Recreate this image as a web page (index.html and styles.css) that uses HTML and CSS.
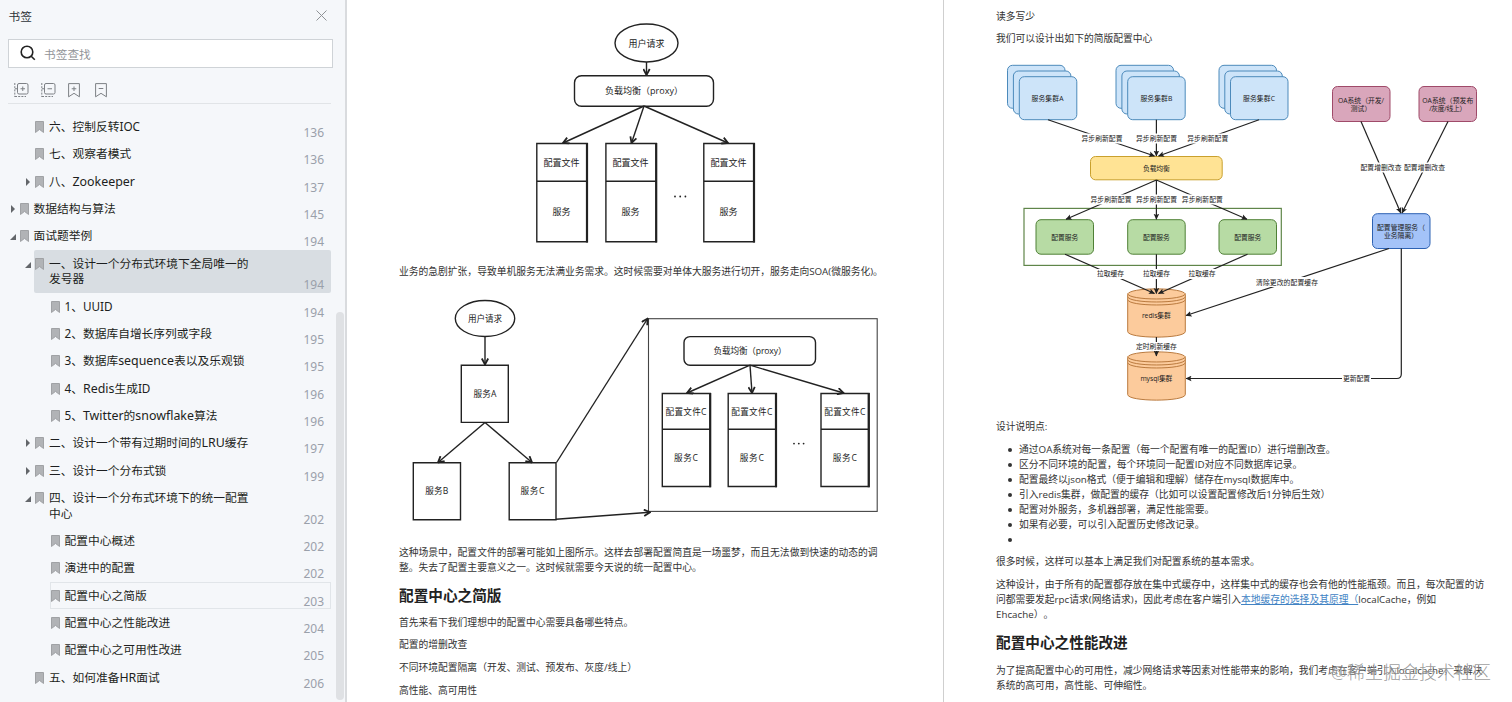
FILE: index.html
```html
<!DOCTYPE html>
<html lang="zh-CN">
<head>
  <meta charset="UTF-8" />
  <meta name="viewport" content="width=device-width, initial-scale=1.0"/>
  <title>书签</title>
  <link rel="stylesheet" href="styles.css">
</head>
<body>
  <!-- shared icons and arrow heads -->
  <svg class="defs" width="0" height="0">
    <defs>
      <symbol id="mark" viewBox="0 0 9 12"><path d="M.5 .5h8v11L4.5 8.4 .5 11.5z" fill="#b1b3b6" stroke="#a0a2a5"/></symbol>
      <marker id="open" viewBox="0 0 8 8" refX="7" refY="4" markerWidth="8" markerHeight="8" markerUnits="userSpaceOnUse" orient="auto">
        <path d="M1 .8L7 4 1 7.2" fill="none" stroke="#222" stroke-width="1.8"/>
      </marker>
      <marker id="solid" viewBox="0 0 6 6" refX="5.5" refY="3" markerWidth="6" markerHeight="6" markerUnits="userSpaceOnUse" orient="auto">
        <path d="M0 .2L6 3 0 5.8 1.2 3z" fill="#222"/>
      </marker>
    </defs>
  </svg>

  <aside class="sidebar">
    <header class="side-head">
      <span>书签</span>
      <svg width="11" height="11" viewBox="0 0 11 11"><path d="M.5 .5l10 10M10.500 .5l-10 10" stroke="#8f9296" fill="none"/></svg>
    </header>
    <div class="search">
      <svg width="16" height="16" viewBox="0 0 16 16" fill="none" stroke="#222" stroke-width="1.6"><circle cx="7" cy="7" r="5.8"/><path d="M11.200 11.200l3.600 3.600"/></svg>
      <span>书签查找</span>
    </div>
    <div class="tools">
      <svg width="15" height="15" viewBox="0 0 15 15" fill="none" stroke="#7d8085"><rect x="3.500" y=".5" width="10.500" height="10.500" rx="1.500"/><path d="M8.750 3.500v4.500M6.500 5.750h4.500M1 5.750h2"/><path d="M.8 0v14M1 13.500h11" stroke-dasharray="2 1.200"/></svg>
      <svg width="15" height="15" viewBox="0 0 15 15" fill="none" stroke="#7d8085"><rect x="3.500" y=".5" width="10.500" height="10.500" rx="1.500"/><path d="M6.500 5.750h4.500M1 5.750h2"/><path d="M.8 0v14M1 13.500h11" stroke-dasharray="2 1.200"/></svg>
      <svg class="bm" width="12" height="15" viewBox="0 0 12 15" fill="none" stroke="#7d8085"><path d="M.6 .6h10.800v13.200L6 10.300 .6 13.800zM6 3.500v4.500M3.700 5.750h4.600"/></svg>
      <svg class="bm" width="12" height="15" viewBox="0 0 12 15" fill="none" stroke="#7d8085"><path d="M.6 .6h10.800v13.200L6 10.300 .6 13.800zM3.700 5.500h4.600"/></svg>
    </div>

    <ul class="tree">
      <li class="l1"><svg><use href="#mark"/></svg><span>六、控制反转IOC</span><b>136</b></li>
      <li class="l1"><svg><use href="#mark"/></svg><span>七、观察者模式</span><b>136</b></li>
      <li class="l1 closed"><svg><use href="#mark"/></svg><span>八、<i>Zookeeper</i></span><b>137</b></li>
      <li class="l0 closed"><svg><use href="#mark"/></svg><span>数据结构与算法</span><b>145</b></li>
      <li class="l0 opened"><svg><use href="#mark"/></svg><span>面试题举例</span><b>194</b></li>
      <li class="l1 opened selected"><svg><use href="#mark"/></svg><span>一、设计一个分布式环境下全局唯一的<br>发号器</span><b>194</b></li>
      <li class="l2"><svg><use href="#mark"/></svg><span>1、UUID</span><b>194</b></li>
      <li class="l2"><svg><use href="#mark"/></svg><span>2、数据库自增长序列或字段</span><b>195</b></li>
      <li class="l2"><svg><use href="#mark"/></svg><span>3、数据库<i>sequence</i>表以及乐观锁</span><b>195</b></li>
      <li class="l2"><svg><use href="#mark"/></svg><span>4、<i>Redis</i>生成ID</span><b>196</b></li>
      <li class="l2"><svg><use href="#mark"/></svg><span>5、<i>Twitter</i>的<i>snowflake</i>算法</span><b>196</b></li>
      <li class="l1 closed"><svg><use href="#mark"/></svg><span>二、设计一个带有过期时间的<i>LRU</i>缓存</span><b>197</b></li>
      <li class="l1 closed"><svg><use href="#mark"/></svg><span>三、设计一个分布式锁</span><b>199</b></li>
      <li class="l1 opened"><svg><use href="#mark"/></svg><span>四、设计一个分布式环境下的统一配置<br>中心</span><b>202</b></li>
      <li class="l2"><svg><use href="#mark"/></svg><span>配置中心概述</span><b>202</b></li>
      <li class="l2"><svg><use href="#mark"/></svg><span>演进中的配置</span><b>202</b></li>
      <li class="l2 current"><svg><use href="#mark"/></svg><span>配置中心之简版</span><b>203</b></li>
      <li class="l2"><svg><use href="#mark"/></svg><span>配置中心之性能改进</span><b>204</b></li>
      <li class="l2"><svg><use href="#mark"/></svg><span>配置中心之可用性改进</span><b>205</b></li>
      <li class="l1"><svg><use href="#mark"/></svg><span>五、如何准备<i>HR</i>面试</span><b>206</b></li>
    </ul>
    <div class="scrollbar"></div>
  </aside>

  <main class="page page-left">
    <!-- single proxy in front of the services -->
    <svg class="diagram plain" width="596" height="264" viewBox="347 0 596 264">
      <ellipse cx="646.500" cy="43" rx="31.500" ry="19"/>
      <rect x="574.500" y="75.700" width="139" height="30.500" rx="7"/>
      <g class="wire">
        <path d="M646.500 62V75"/>
        <path d="M644 106L563 143"/>
        <path d="M644 106L631.500 143"/>
        <path d="M644 106L728 143"/>
      </g>
      <path d="M536.800 143.500h50.400v98.300h-50.400zM536.800 181.300h50.400M605.900 143.500h50.400v98.300h-50.400zM605.900 181.300h50.400M703.800 143.500h50.400v98.300h-50.400zM703.800 181.300h50.400"/>
      <path class="thick" d="M587 143v99.500M656.200 143v99.500M754 143v99.500"/>
      <text x="646.500" y="43" textLength="36">用户请求</text>
      <text x="644" y="90.500" textLength="78">负载均衡（proxy）</text>
      <text x="561.500" y="162" textLength="36">配置文件</text>
      <text x="630.500" y="162" textLength="36">配置文件</text>
      <text x="728.500" y="162" textLength="36">配置文件</text>
      <text x="561.500" y="211.500">服务</text>
      <text x="630.500" y="211.500">服务</text>
      <text x="728.500" y="211.500">服务</text>
      <g class="dots"><circle cx="675" cy="196.500" r=".9"/><circle cx="680.200" cy="196.500" r=".9"/><circle cx="685.400" cy="196.500" r=".9"/></g>
    </svg>

    <p>业务的急剧扩张，导致单机服务无法满业务需求。这时候需要对单体大服务进行切开，服务走向SOA(微服务化)。</p>

    <!-- service C expanded into its own cluster -->
    <svg class="diagram plain small" width="596" height="266" viewBox="347 279 596 266">
      <rect class="frame" x="648.500" y="318.700" width="228.700" height="192.700"/>
      <ellipse cx="485" cy="318.500" rx="29.700" ry="18"/>
      <path d="M461.300 365.200h47v57.200h-47zM413.300 462.800h47.200v57h-47.200zM509.200 462.800h46.800v57h-46.800z"/>
      <rect x="684" y="336.600" width="131.500" height="28.600" rx="6"/>
      <path d="M662.300 393.500h48v93h-48zM662.300 429.200h48M728.200 393.500h48v93h-48zM728.200 429.200h48M821 393.500h48v93h-48zM821 429.200h48"/>
      <path class="thick" d="M710.200 393v94.300M776 393v94.300M868.700 393v94.300"/>
      <g class="wire">
        <path d="M485 336.500V364.500"/>
        <path d="M485 422.500L438 462.500"/>
        <path d="M485 422.500L532 462.500"/>
        <path d="M556.500 462.500L647.700 318.500"/>
        <path d="M556 519.300L650 512.300"/>
        <path d="M750 365.200L687 393"/>
        <path d="M750 365.200L752 393"/>
        <path d="M750 365.200L843.500 393"/>
      </g>
      <text x="485" y="318.500" textLength="34">用户请求</text>
      <text x="485" y="393.500" textLength="23">服务A</text>
      <text x="436.800" y="491.300" textLength="23">服务B</text>
      <text x="532.500" y="491.300" textLength="24">服务C</text>
      <text x="750" y="350.700" textLength="73">负载均衡（proxy）</text>
      <text x="686" y="411.500" textLength="41">配置文件C</text>
      <text x="751.800" y="411.500" textLength="41">配置文件C</text>
      <text x="844.800" y="411.500" textLength="41">配置文件C</text>
      <text x="686" y="457.500" textLength="24">服务C</text>
      <text x="751.800" y="457.500" textLength="24">服务C</text>
      <text x="844.800" y="457.500" textLength="24">服务C</text>
      <g class="dots"><circle cx="794" cy="443.600" r=".9"/><circle cx="798.800" cy="443.600" r=".9"/><circle cx="803.600" cy="443.600" r=".9"/></g>
    </svg>

    <p>这种场景中，配置文件的部署可能如上图所示。这样去部署配置简直是一场噩梦，而且无法做到快速的动态的调<br>整。失去了配置主要意义之一。这时候就需要今天说的统一配置中心。</p>
    <h2>配置中心之简版</h2>
    <p>首先来看下我们理想中的配置中心需要具备哪些特点。</p>
    <p>配置的增删改查</p>
    <p>不同环境配置隔离（开发、测试、预发布、灰度/线上）</p>
    <p>高性能、高可用性</p>
  </main>

  <section class="page page-right">
    <p>读多写少</p>
    <p>我们可以设计出如下的简版配置中心</p>

    <!-- config center architecture -->
    <svg class="diagram arch" width="568" height="372" viewBox="944 46 568 372">
      <g class="blue">
        <rect x="1007.500" y="65.300" width="57.500" height="43" rx="5"/><rect x="1013.400" y="71" width="57.500" height="43" rx="5"/><rect x="1019.300" y="76.700" width="57.500" height="43" rx="5"/>
        <rect x="1116" y="65.300" width="57.500" height="43" rx="5"/><rect x="1121.900" y="71" width="57.500" height="43" rx="5"/><rect x="1127.700" y="76.700" width="57.500" height="43" rx="5"/>
        <rect x="1219" y="65.300" width="57.500" height="43" rx="5"/><rect x="1224.800" y="71" width="57.500" height="43" rx="5"/><rect x="1230.500" y="76.700" width="57.500" height="43" rx="5"/>
      </g>
      <rect class="yellow" x="1090.500" y="156.500" width="131.700" height="23.300" rx="5"/>
      <rect class="outline" x="1024" y="208.400" width="257.300" height="57"/>
      <g class="green">
        <rect x="1036" y="219.700" width="57.500" height="34.500" rx="5"/>
        <rect x="1127.700" y="219.700" width="57.500" height="34.500" rx="5"/>
        <rect x="1219" y="219.700" width="57.500" height="34.500" rx="5"/>
      </g>
      <g class="pink">
        <rect x="1332.500" y="86.500" width="57.500" height="35" rx="5"/>
        <rect x="1419" y="86.500" width="57.500" height="35" rx="5"/>
      </g>
      <rect class="indigo" x="1372.500" y="213.700" width="57.500" height="34.800" rx="5"/>
      <g class="orange">
        <path d="M1127.700 294.500c0-7.500 57.600-7.500 57.600 0v37c0 7.500-57.600 7.500-57.600 0z"/>
        <path d="M1127.700 293.500c0 7.300 57.600 7.300 57.600 0M1127.700 296.500c0 7.300 57.600 7.300 57.600 0M1127.700 299.500c0 7.300 57.600 7.300 57.600 0"/>
        <path d="M1127.700 357.500c0-7.500 57.600-7.500 57.600 0v37c0 7.500-57.600 7.500-57.600 0z"/>
        <path d="M1127.700 356.500c0 7.300 57.600 7.300 57.600 0M1127.700 359.500c0 7.300 57.600 7.300 57.600 0M1127.700 362.500c0 7.300 57.600 7.300 57.600 0"/>
      </g>
      <g class="wire">
        <path d="M1048 119.700L1154.500 156"/>
        <path d="M1156.400 119.700V156"/>
        <path d="M1259 119.700L1158.500 156"/>
        <path d="M1156.400 180L1066 219.300"/>
        <path d="M1156.400 180V219.300"/>
        <path d="M1156.400 180L1247 219.300"/>
        <path d="M1065 254.200L1154.500 293.500"/>
        <path d="M1156.400 254.200V293.500"/>
        <path d="M1247.500 254.200L1158.500 293.500"/>
        <path d="M1156.400 337V356"/>
        <path d="M1361 121.500L1400.800 213"/>
        <path d="M1448 121.500L1402 213"/>
        <path d="M1389 248.500L1186 315.500"/>
        <path d="M1401.300 248.500V374q0 4.500-4.500 4.500H1186"/>
      </g>
      <!-- white plates under the edge labels -->
      <path class="plate" d="M1081 133.500h42v10h-42zM1136 133.500h42v10h-42zM1187 133.500h42v10h-42zM1090 194.500h42v10h-42zM1136 194.500h42v10h-42zM1181 194.500h42v10h-42zM1096 269h29v10h-29zM1142 269h29v10h-29zM1188 269h29v10h-29zM1136 342h42v9h-42zM1360 162.500h42v10h-42zM1403 162.500h42v10h-42zM1255 277h64v10h-64zM1342 373.500h29v10h-29z"/>
      <text x="1047.500" y="98.500" textLength="32">服务集群A</text>
      <text x="1156.400" y="98.500" textLength="32">服务集群B</text>
      <text x="1259" y="98.500" textLength="32">服务集群C</text>
      <text x="1102" y="138.300" textLength="41">异步刷新配置</text>
      <text x="1156.500" y="138.300" textLength="41">异步刷新配置</text>
      <text x="1207.700" y="138.300" textLength="41">异步刷新配置</text>
      <text x="1156.400" y="168.500" textLength="27">负载均衡</text>
      <text x="1111" y="199.500" textLength="41">异步刷新配置</text>
      <text x="1156.500" y="199.500" textLength="41">异步刷新配置</text>
      <text x="1202.300" y="199.500" textLength="41">异步刷新配置</text>
      <text x="1064.800" y="237" textLength="27">配置服务</text>
      <text x="1156.400" y="237" textLength="27">配置服务</text>
      <text x="1247.700" y="237" textLength="27">配置服务</text>
      <text x="1110.500" y="273.800" textLength="27">拉取缓存</text>
      <text x="1156.500" y="273.800" textLength="27">拉取缓存</text>
      <text x="1202" y="273.800" textLength="27">拉取缓存</text>
      <text x="1156.400" y="315.500" textLength="29">redis集群</text>
      <text x="1156.400" y="346.500" textLength="41">定时刷新缓存</text>
      <text x="1156.400" y="378.500" textLength="32">mysql集群</text>
      <text x="1361" y="100" textLength="46">OA系统（开发/</text>
      <text x="1361" y="108.300">测试）</text>
      <text x="1447.700" y="100" textLength="51">OA系统（预发布</text>
      <text x="1447.700" y="108.300" textLength="37">/灰度/线上）</text>
      <text x="1381" y="167.500" textLength="41">配置增删改查</text>
      <text x="1424.500" y="167.500" textLength="41">配置增删改查</text>
      <text x="1401" y="227" textLength="48">配置管理服务（</text>
      <text x="1401" y="235.500">业务隔离）</text>
      <text x="1287" y="282" textLength="62">清除更改的配置缓存</text>
      <text x="1356.500" y="378.500" textLength="27">更新配置</text>
    </svg>

    <p>设计说明点:</p>
    <ul class="notes">
      <li>通过OA系统对每一条配置（每一个配置有唯一的配置ID）进行增删改查。</li>
      <li>区分不同环境的配置，每个环境同一配置ID对应不同数据库记录。</li>
      <li>配置最终以json格式（便于编辑和理解）储存在mysql数据库中。</li>
      <li>引入redis集群，做配置的缓存（比如可以设置配置修改后1分钟后生效）</li>
      <li>配置对外服务，多机器部署，满足性能需要。</li>
      <li>如果有必要，可以引入配置历史修改记录。</li>
      <li></li>
    </ul>
    <p>很多时候，这样可以基本上满足我们对配置系统的基本需求。</p>
    <p>这种设计，由于所有的配置都存放在集中式缓存中，这样集中式的缓存也会有他的性能瓶颈。而且，每次配置的访<br>问都需要发起rpc请求(网络请求)，因此考虑在客户端引入<a>本地缓存的选择及其原理（</a>localCache，例如<br>Ehcache）。</p>
    <h2>配置中心之性能改进</h2>
    <p>为了提高配置中心的可用性，减少网络请求等因素对性能带来的影响，我们考虑在客户端引入localcache，来解决<br>系统的高可用，高性能、可伸缩性。</p>
    <div class="watermark">@稀土掘金技术社区</div>
  </section>
</body>
</html>
```
FILE: styles.css
```css
* {
  box-sizing: border-box;
}
body {
  margin: 0;
  display: flex;
  width: 1512px;
  height: 702px;
  overflow: hidden;
  background: #fff;
  color: #333;
  font-family: "Open Sans", "Noto Sans CJK SC", sans-serif;
  text-spacing-trim: space-all;
}
.defs {
  position: absolute;
}
ul {
  list-style: none;
  margin: 0;
  padding: 0;
}

/* bookmark panel */
.sidebar {
  position: relative;
  flex: none;
  width: 347px;
  background: #f5f7fa;
  border-right: 2px solid #d9dbde;
  font-family: "Noto Sans", "Noto Sans CJK SC", sans-serif;
}
.side-head {
  display: flex;
  justify-content: space-between;
  align-items: center;
  height: 31px;
  padding: 0 18.5px 0 8.5px;
  font-size: 11.7px;
  color: #2d3238;
}
.search {
  display: flex;
  align-items: center;
  gap: 8px;
  width: 325px;
  height: 29px;
  margin: 8px 0 0 8px;
  padding: 0 0 1px 11px;
  background: #fff;
  border: 1px solid #cfd3d7;
  font-size: 11.7px;
  color: #929497;
}
.tools {
  display: flex;
  gap: 12px;
  align-items: center;
  width: 323px;
  height: 36px;
  margin-left: 8px;
  padding: 9px 0 0 5.5px;
  border-bottom: 1px solid #e1e4e7;
  margin-bottom: 9px;
}
.tools .bm + .bm {
  margin-left: 3px;
}
.tree li {
  position: relative;
  display: flex;
  min-height: 27.35px;
  margin-right: 14.5px;
  padding: 5.9px 6.5px 5.7px 1px;
  font-size: 11.74px;
  line-height: 15.7px;
  color: #1c1e20;
  white-space: nowrap;
}
.tree svg {
  flex: none;
  width: 9px;
  height: 12px;
  margin: 2px 5px 0 0;
}
.tree i {
  font-size: 12.4px;
  font-style: normal;
  line-height: 1;
}
.tree b {
  margin: 0 0 -6px auto;
  align-self: flex-end;
  font-size: 12px;
  font-weight: normal;
  color: #9aa0aa;
}
.tree .l0 {
  margin-left: 18.5px;
}
.tree .l1 {
  margin-left: 34px;
}
.tree .l2 {
  margin-left: 49.5px;
}
.tree .selected {
  background: #d8dde2;
  border-radius: 2px;
}
.tree .current {
  box-shadow: inset 0 0 0 1px #e1e5e9;
}
.closed::before,
.opened::before {
  content: "";
  position: absolute;
  left: -8px;
  top: 10px;
  border: solid transparent;
  border-width: 4px 0 4px 4.5px;
  border-left-color: #63666a;
}
.opened::before {
  left: -9px;
  top: 12px;
  border-width: 0 0 6px 6px;
  border-color: transparent transparent #63666a;
}
.scrollbar {
  position: absolute;
  left: 336px;
  top: 312px;
  width: 8px;
  height: 388px;
  border-radius: 4px;
  background: #dfe1e4;
}

/* document pages */
.page {
  flex: none;
  overflow: hidden;
  font-size: 9.77px;
  line-height: 15px;
  white-space: nowrap;
}
.page-left {
  width: 597px;
  padding-left: 52px;
  border-right: 1px solid #cfcfcf;
}
.page-right {
  position: relative;
  width: 568px;
  padding: 8.5px 0 0 52px;
}
.page p {
  margin: 0 0 7.8px;
}
.page h2 {
  margin: 9.5px 0 10px;
  font-size: 14.65px;
  line-height: 20px;
  color: #222;
}
.page-right h2 {
  margin: 10px 0 10.5px;
}
.page a {
  color: #4183c4;
  text-decoration: underline;
}
.diagram {
  display: block;
  margin-left: -52px;
}
.page p:has(+ svg) {
  margin-bottom: 0;
}
.arch + p {
  padding-top: .5px;
}
.notes {
  margin: 8px 0 7.5px;
}
.notes li {
  position: relative;
  height: 15.03px;
  padding-left: 23px;
}
.notes li::before {
  content: "";
  position: absolute;
  left: 11.500px;
  top: 6px;
  width: 4px;
  height: 4px;
  border-radius: 50%;
  background: #333;
}
.watermark {
  position: absolute;
  left: 387px;
  top: 660px;
  font-size: 18px;
  line-height: 24px;
  color: rgba(120, 120, 120, .75);
  font-weight: 300;
  text-shadow: 0 0 2px #fff;
}

/* diagrams */
.diagram text {
  text-anchor: middle;
  dominant-baseline: central;
  fill: #222;
  stroke: none;
}
.plain {
  fill: none;
  stroke: #222;
  stroke-width: 1.4;
}
.plain text {
  font-size: 9px;
}
.small text {
  font-size: 8.6px;
}
.plain .thick {
  stroke-width: 2.2;
}
.plain .frame {
  stroke: #444;
  stroke-width: 1.1;
}
.plain .wire path {
  marker-end: url(#open);
}
.plain .dots {
  fill: #222;
  stroke: none;
}
.arch text {
  font-size: 6.8px;
}
.arch .wire path {
  fill: none;
  stroke: #222;
  stroke-width: 1.2;
  marker-end: url(#solid);
}
.plate {
  fill: #fff;
}
.blue {
  fill: #cde4f9;
  stroke: #4c8abb;
}
.yellow {
  fill: #ffe394;
  stroke: #c9a02d;
}
.outline {
  fill: none;
  stroke: #5f8549;
  stroke-width: 1.2;
}
.green {
  fill: #b7dba4;
  stroke: #4f8036;
}
.pink {
  fill: #d9a6bb;
  stroke: #9f4a69;
}
.indigo {
  fill: #a4c3f8;
  stroke: #2d62b3;
}
.orange {
  fill: #fccb9c;
  stroke: #ba7a3e;
}
```
